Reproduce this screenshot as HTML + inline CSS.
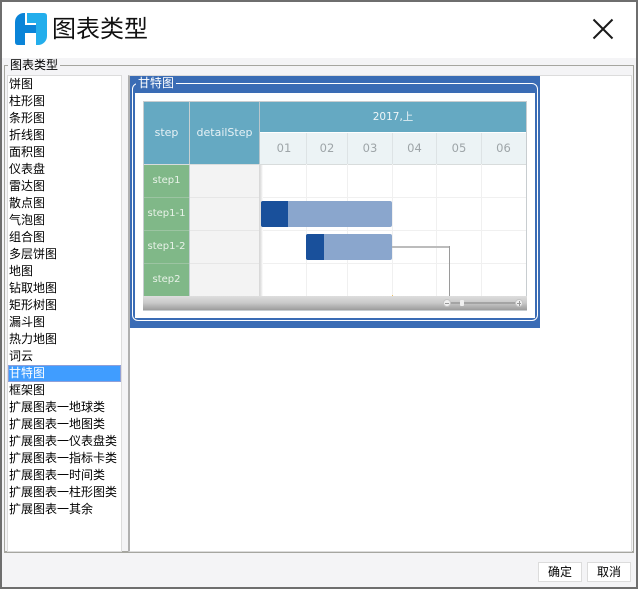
<!DOCTYPE html>
<html lang="zh">
<head>
<meta charset="utf-8">
<style>
html,body{margin:0;padding:0;width:638px;height:589px;overflow:hidden;background:#f4f4f6}
*{box-sizing:border-box}
body{font-family:"Liberation Sans","WenQuanYi Zen Hei","Noto Sans CJK SC",sans-serif;position:relative}
.a{position:absolute}
.it{position:absolute;left:9px;font-size:12px;line-height:17px;height:17px;color:#000;white-space:nowrap}
.g{font-family:"DejaVu Sans","Liberation Sans",sans-serif;font-size:11px;text-align:center;position:absolute}
.m{position:absolute;top:133px;height:31px;line-height:31px;text-align:center;color:#9ea5a8;font-size:11.5px;font-family:"DejaVu Sans",sans-serif}
.v{position:absolute;width:1px;background:#f0f0f0;top:164px;height:132px}
.h{position:absolute;left:261px;width:265px;height:1px;background:#f0f0f0}
.s{position:absolute;left:144px;width:45px;height:32px;background:#80b888;color:#e8f2e8;line-height:32px;text-align:center;font-size:10px;font-family:"DejaVu Sans",sans-serif;white-space:nowrap}
.d{position:absolute;left:190px;width:69px;height:32px;background:#f3f3f3}
</style>
</head>
<body>
<!-- window frame -->
<div class="a" style="left:0;top:0;width:638px;height:589px;border:2px solid #6e6e6e;z-index:30;pointer-events:none"></div>
<div class="a" style="left:2px;top:2px;width:634px;height:56px;background:#fff"></div>

<!-- logo -->
<svg class="a" style="left:15px;top:13px" width="33" height="33" viewBox="0 0 33 33">
<path d="M9 0H10V32H3Q0 32 0 29V9A9 9 0 0 1 9 0Z" fill="#0a84d8"/>
<path d="M12 0H29Q32 0 32 3V10H12Z" fill="#23aeec"/>
<path d="M10 12H21V20H10Z" fill="#0a84d8"/>
<path d="M21 10H32V23A9 9 0 0 1 23 32H21Z" fill="#23aeec"/>
</svg>
<div class="a" style="left:52px;top:12px;font-size:24px;line-height:36px;color:#111;font-family:'Liberation Sans','Noto Sans CJK SC',sans-serif;white-space:nowrap">图表类型</div>

<!-- close -->
<svg class="a" style="left:590px;top:16px" width="26" height="26" viewBox="0 0 26 26"><path d="M3.500 3.500L22.500 22.500M22.500 3.500L3.500 22.500" stroke="#1a1a1a" stroke-width="2" fill="none"/></svg>

<!-- group box -->
<div class="a" style="left:4px;top:65px;width:630px;height:488px;border:1px solid #a6a6a0;border-width:1px 1px 2px 1px"></div>
<div class="a" style="left:8px;top:58px;height:14px;padding:0 2px;background:#f4f4f6;font-size:12px;line-height:15px;color:#000;white-space:nowrap">图表类型</div>

<!-- list -->
<div class="a" style="left:7px;top:75px;width:115px;height:477px;background:#fff;border:1px solid #dcdcdc"></div>
<div class="a" style="left:8px;top:365px;width:113px;height:17px;background:#409dff;border:1px solid #8f9fd8"></div>
<div class="it" style="top:76px">饼图</div>
<div class="it" style="top:93px">柱形图</div>
<div class="it" style="top:110px">条形图</div>
<div class="it" style="top:127px">折线图</div>
<div class="it" style="top:144px">面积图</div>
<div class="it" style="top:161px">仪表盘</div>
<div class="it" style="top:178px">雷达图</div>
<div class="it" style="top:195px">散点图</div>
<div class="it" style="top:212px">气泡图</div>
<div class="it" style="top:229px">组合图</div>
<div class="it" style="top:246px">多层饼图</div>
<div class="it" style="top:263px">地图</div>
<div class="it" style="top:280px">钻取地图</div>
<div class="it" style="top:297px">矩形树图</div>
<div class="it" style="top:314px">漏斗图</div>
<div class="it" style="top:331px">热力地图</div>
<div class="it" style="top:348px">词云</div>
<div class="it" style="top:365px;color:#fff">甘特图</div>
<div class="it" style="top:382px">框架图</div>
<div class="it" style="top:399px">扩展图表一地球类</div>
<div class="it" style="top:416px">扩展图表一地图类</div>
<div class="it" style="top:433px">扩展图表一仪表盘类</div>
<div class="it" style="top:450px">扩展图表一指标卡类</div>
<div class="it" style="top:467px">扩展图表一时间类</div>
<div class="it" style="top:484px">扩展图表一柱形图类</div>
<div class="it" style="top:501px">扩展图表一其余</div>

<!-- right panel -->
<div class="a" style="left:128px;top:75px;width:504px;height:477px;background:#fff;border:1px solid #dcdcdc;border-left:2px solid #b0b0b0"></div>

<!-- blue selected card -->
<div class="a" style="left:130px;top:76px;width:410px;height:252px;background:#3a6cb5"></div>
<div class="a" style="left:132px;top:83px;width:406px;height:238px;border:1px solid #fff;border-radius:6px"></div>
<div class="a" style="left:135px;top:93px;width:400px;height:225px;background:#fff"></div>
<div class="a" style="left:136px;top:76px;height:15px;padding:0 2px;background:#3a6cb5;color:#fff;font-size:12px;line-height:15px;white-space:nowrap">甘特图</div>

<!-- gantt -->
<div class="a" style="left:143px;top:101px;width:384px;height:210px;background:#fff;border:1px solid #c8cdd0"></div>
<div class="g" style="left:144px;top:102px;width:45px;height:62px;background:#65a9c2;color:#e6f1f5;line-height:62px">step</div>
<div class="g" style="left:190px;top:102px;width:69px;height:62px;background:#65a9c2;color:#e6f1f5;line-height:62px;white-space:nowrap">detailStep</div>
<div class="a" style="left:189px;top:102px;width:1px;height:194px;background:#c6d0d2"></div>
<div class="a" style="left:259px;top:102px;width:1px;height:62px;background:#b8c6cc"></div>
<div class="a" style="left:260px;top:102px;width:266px;height:30px;background:#65a9c2;color:#eef6f8;line-height:30px;text-align:center;font-size:10.5px;font-family:'DejaVu Sans','Noto Sans CJK SC',sans-serif">2017,上</div>
<div class="a" style="left:260px;top:133px;width:266px;height:31px;background:#ecf3f5"></div>
<div class="a" style="left:144px;top:164px;width:382px;height:1px;background:#d8dcdc"></div>
<div class="m" style="left:261px;width:46px">01</div>
<div class="m" style="left:305px;width:44px">02</div>
<div class="m" style="left:348px;width:44px">03</div>
<div class="m" style="left:392px;width:45px">04</div>
<div class="m" style="left:437px;width:44px">05</div>
<div class="m" style="left:481px;width:45px">06</div>
<div class="a" style="left:306px;top:133px;width:1px;height:31px;background:#dde3e5"></div>
<div class="a" style="left:347px;top:133px;width:1px;height:31px;background:#dde3e5"></div>
<div class="a" style="left:392px;top:133px;width:1px;height:31px;background:#dde3e5"></div>
<div class="a" style="left:436px;top:133px;width:1px;height:31px;background:#dde3e5"></div>
<div class="a" style="left:481px;top:133px;width:1px;height:31px;background:#dde3e5"></div>
<div class="v" style="left:306px"></div>
<div class="v" style="left:347px"></div>
<div class="v" style="left:392px"></div>
<div class="v" style="left:436px"></div>
<div class="v" style="left:481px"></div>
<div class="h" style="top:197px"></div>
<div class="h" style="top:230px"></div>
<div class="h" style="top:263px"></div>

<div class="s" style="top:165px">step1</div>
<div class="s" style="top:198px">step1-1</div>
<div class="s" style="top:231px">step1-2</div>
<div class="s" style="top:264px">step2</div>
<div class="a" style="left:144px;top:197px;width:45px;height:1px;background:#9cc4a2"></div>
<div class="a" style="left:144px;top:230px;width:45px;height:1px;background:#9cc4a2"></div>
<div class="a" style="left:144px;top:263px;width:45px;height:1px;background:#9cc4a2"></div>
<div class="d" style="top:165px"></div>
<div class="d" style="top:198px"></div>
<div class="d" style="top:231px"></div>
<div class="d" style="top:264px"></div>
<div class="a" style="left:190px;top:197px;width:70px;height:1px;background:#e6e6e6"></div>
<div class="a" style="left:190px;top:230px;width:70px;height:1px;background:#e6e6e6"></div>
<div class="a" style="left:190px;top:263px;width:70px;height:1px;background:#e6e6e6"></div>
<div class="a" style="left:259px;top:165px;width:4px;height:131px;background:linear-gradient(90deg,#d6d6d6,#e2e2e2 45%,#fff)"></div>

<div class="a" style="left:261px;top:201px;width:131px;height:26px;background:#8aa6cd;border-radius:2px"></div>
<div class="a" style="left:261px;top:201px;width:27px;height:26px;background:#19509b;border-radius:2px 0 0 2px"></div>
<div class="a" style="left:306px;top:234px;width:86px;height:26px;background:#8aa6cd;border-radius:2px"></div>
<div class="a" style="left:306px;top:234px;width:18px;height:26px;background:#19509b;border-radius:2px 0 0 2px"></div>
<div class="a" style="left:392px;top:246px;width:58px;height:2px;background:#bcbcbc"></div>
<div class="a" style="left:449px;top:246px;width:1px;height:50px;background:#9a9a9a"></div>
<div class="a" style="left:392px;top:295px;width:1px;height:1px;background:#f0c060"></div>

<!-- scrollbar -->
<div class="a" style="left:143px;top:296px;width:384px;height:14px;background:linear-gradient(#dedede,#c8c8c8 50%,#9c9c9c)"></div>
<div class="a" style="left:450px;top:302px;width:68px;height:2px;background:#a4a4a4"></div>
<div class="a" style="left:443px;top:299px;width:8px;height:8px;border-radius:50%;background:#f0f0f0;border:1px solid #c4c4c4"></div>
<div class="a" style="left:515px;top:299px;width:8px;height:8px;border-radius:50%;background:#f0f0f0;border:1px solid #c4c4c4"></div>
<div class="a" style="left:445px;top:303px;width:4px;height:1px;background:#999"></div>
<div class="a" style="left:517px;top:303px;width:4px;height:1px;background:#999"></div>
<div class="a" style="left:519px;top:301px;width:1px;height:5px;background:#999"></div>
<div class="a" style="left:460px;top:300px;width:4px;height:6px;background:#efefef;border-radius:1px"></div>

<!-- buttons -->
<div class="a" style="left:538px;top:562px;width:44px;height:20px;background:#fff;border:1px solid #dcdcdc;font-size:12px;line-height:19px;text-align:center;color:#000">确定</div>
<div class="a" style="left:587px;top:562px;width:44px;height:20px;background:#fff;border:1px solid #dcdcdc;font-size:12px;line-height:19px;text-align:center;color:#000">取消</div>
</body>
</html>
